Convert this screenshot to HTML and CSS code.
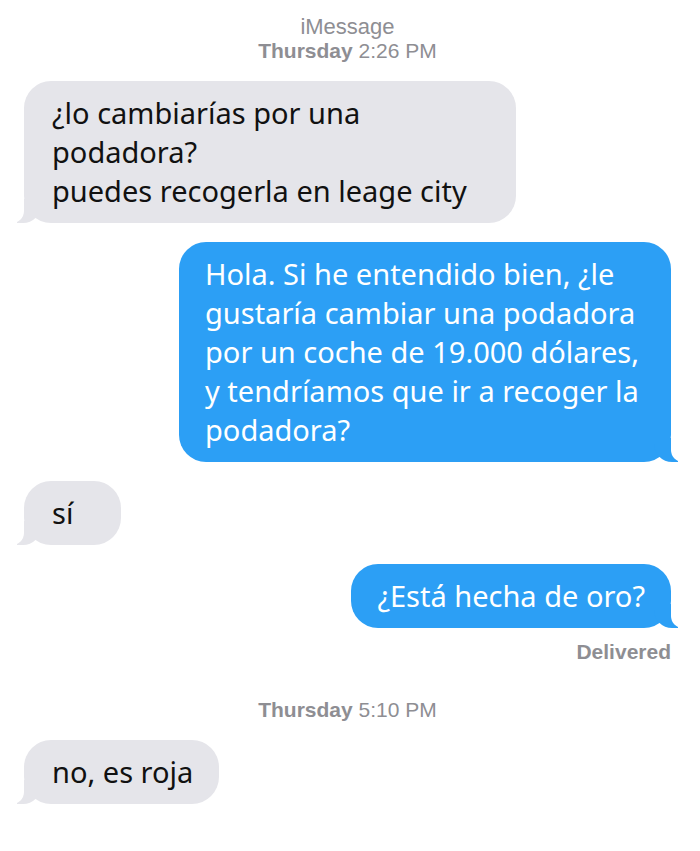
FILE: index.html
```html
<!DOCTYPE html>
<html lang="es">
<head>
  <meta charset="UTF-8" />
  <meta name="viewport" content="width=device-width, initial-scale=1.0" />
  <title>iMessage</title>
  <link rel="stylesheet" href="styles.css">
</head>
<body>
  <div class="thread">
    <div class="stamp">
      <div class="service">iMessage</div>
      <div><b>Thursday</b> 2:26 PM</div>
    </div>

    <div class="bubble them">¿lo cambiarías por una podadora?<br>puedes recogerla en leage city</div>
    <div class="bubble me">Hola. Si he entendido bien, ¿le gustaría cambiar una podadora por un coche de 19.000 dólares, y tendríamos que ir a recoger la podadora?</div>
    <div class="bubble them short">sí</div>
    <div class="bubble me">¿Está hecha de oro?</div>
    <div class="delivered">Delivered</div>

    <div class="stamp">
      <div><b>Thursday</b> 5:10 PM</div>
    </div>

    <div class="bubble them">no, es roja</div>
  </div>
</body>
</html>
```

FILE: styles.css
```css
/* iMessage thread */
body {
  margin: 0;
  background: #fff;
  font-family: 'Noto Sans', sans-serif;
}
.thread {
  display: flex;
  flex-direction: column;
  padding: 15px 29px 20px 24px;
}
.stamp {
  align-self: center;
  text-align: center;
  font-family: 'Liberation Sans', Arial, sans-serif;
  font-size: 21px;
  line-height: 24px;
  color: #8e8e93;
}
.stamp .service {
  font-size: 22px;
}
.stamp b {
  font-weight: 600;
}
.bubble {
  position: relative;
  max-width: 492px;
  box-sizing: border-box;
  padding: 12px 26px 13px 26px;
  border-radius: 27px;
  font-size: 29px;
  line-height: 39px;
  margin-bottom: 19px;
}
.bubble.them {
  align-self: flex-start;
  padding-left: 28px;
  background: #e5e5ea;
  color: #111;
}
.bubble.me {
  align-self: flex-end;
  background: #2c9ff5;
  color: #fff;
}
.bubble.short {
  min-width: 97px;
}

/* tails */
.bubble::before,
.bubble::after {
  content: "";
  position: absolute;
  bottom: 0;
  height: 24px;
}
.bubble.them::before {
  left: -7px;
  width: 24px;
  background: #e5e5ea;
  border-bottom-right-radius: 18px;
}
.bubble.them::after {
  left: -14px;
  width: 14px;
  background: #fff;
  border-bottom-right-radius: 12px;
}
.bubble.me::before {
  right: -7px;
  width: 24px;
  background: #2c9ff5;
  border-bottom-left-radius: 18px;
}
.bubble.me::after {
  right: -14px;
  width: 14px;
  background: #fff;
  border-bottom-left-radius: 12px;
}

.delivered {
  align-self: flex-end;
  margin: -7px 0 34px;
  font-family: 'Liberation Sans', Arial, sans-serif;
  font-size: 21px;
  line-height: 24px;
  font-weight: 600;
  color: #8e8e93;
}
.stamp + .bubble {
  margin-top: 18px;
}
```
